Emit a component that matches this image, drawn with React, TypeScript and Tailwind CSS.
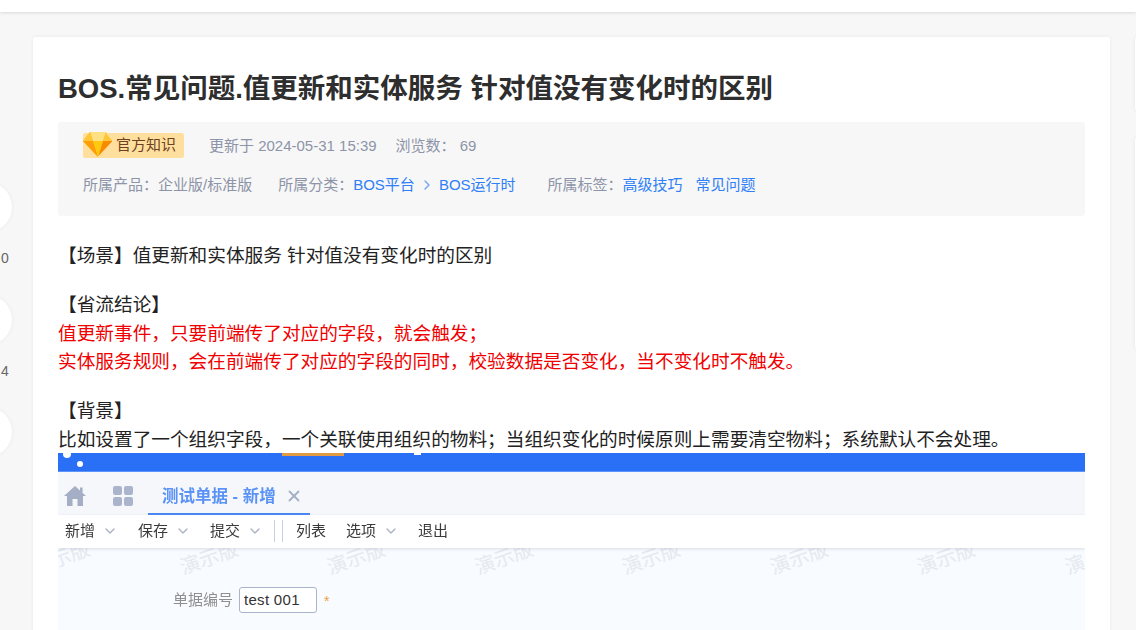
import React from 'react';
import { ChevronDown, X } from 'lucide-react';

const font = "[font-family:'Liberation_Sans','Noto_Sans_CJK_SC',sans-serif]";

const toolbarItems = [
  { label: '新增', width: 'w-[73px]' },
  { label: '保存', width: 'w-[72px]' },
  { label: '提交', width: 'w-[64px]' },
];

const watermarks = [0, 1, 2, 3, 4, 5, 6, 7];

const Diamond = () => (
  <svg width="30" height="26" viewBox="0 0 30 26" className="shrink-0">
    <polygon points="7,1 23,1 30,10 15,26 0,10" fill="#ffb400" />
    <polygon points="7,1 23,1 20,10 10,10" fill="#ffe082" />
    <polygon points="0,10 10,10 15,26" fill="#ff9d0a" />
    <polygon points="30,10 20,10 15,26" fill="#f98a00" />
    <polygon points="10,10 20,10 15,26" fill="#ffc912" />
    <polygon points="7,1 10,10 0,10" fill="#ffc63a" />
    <polygon points="23,1 20,10 30,10" fill="#ffc63a" />
    <polyline points="23,1 30,10 15,26" fill="none" stroke="#fff3d0" strokeWidth="0.8" />
  </svg>
);

const HomeIcon = () => (
  <svg width="22" height="20" viewBox="0 0 22 20" className="mt-[6px] shrink-0" fill="#a4afc6">
    <path d="M11 0 L22 10 L19 10 L19 20 L13.5 20 L13.5 13 L8.5 13 L8.5 20 L3 20 L3 10 L0 10 Z" />
    <rect x="16" y="1.5" width="2.6" height="5" />
  </svg>
);

const FakeScreenshot = () => (
  <div className="relative mt-[-2px] h-[177px] overflow-hidden bg-[#f8fbff]">
    <div className="relative h-[19px] border-b border-[#5c94fa] bg-[#2a70f6]">
      <div className="absolute left-[5px] top-[-3px] h-[8px] w-[8px] rounded-full bg-white" />
      <div className="absolute left-[19px] top-[8px] h-[6px] w-[6px] rounded-full bg-white" />
      <div className="absolute left-[224px] top-0 h-[3px] w-[62px] bg-[#e39a45]" />
      <div className="absolute left-[356px] top-[-2px] h-[4px] w-[7px] bg-white" />
    </div>
    <div className="flex h-[43px] items-center bg-[#f5f7fb] pl-[6px]">
      <HomeIcon />
      <div className="ml-[27px] mt-[6px] grid h-[20px] w-[20px] grid-cols-2 gap-[2px]">
        <span className="rounded-[2px] bg-[#aab5cd]" />
        <span className="rounded-[2px] bg-[#aab5cd]" />
        <span className="rounded-[2px] bg-[#aab5cd]" />
        <span className="rounded-[2px] bg-[#aab5cd]" />
      </div>
      <div className="ml-[15px] flex h-full w-[162px] items-center border-b-2 border-[#4a88f5] pl-[14px] pt-[8px]">
        <span className="text-[16.5px] font-bold whitespace-nowrap text-[#5a93f5] blur-[0.3px]">测试单据 - 新增</span>
        <X size={18} strokeWidth={2.4} className="ml-[9px] shrink-0 text-[#a4afc6]" />
      </div>
    </div>
    <div className="relative z-10 flex h-[33px] items-center bg-white pl-[7px] text-[15px] text-[#3a3a3a] shadow-[0_1px_3px_rgba(120,130,160,0.25)]">
      {toolbarItems.map((item) => (
        <div key={item.label} className={`flex items-center ${item.width}`}>
          <span className="blur-[0.3px]">{item.label}</span>
          <ChevronDown size={16} className="ml-[7px] text-[#a9b1c2]" />
        </div>
      ))}
      <span className="h-[22px] w-[1px] bg-[#c5cfe6]" />
      <span className="ml-[7px] h-[22px] w-[1px] bg-[#c5cfe6]" />
      <span className="ml-[13px] blur-[0.3px]">列表</span>
      <span className="ml-[20px] blur-[0.3px]">选项</span>
      <ChevronDown size={16} className="ml-[7px] text-[#a9b1c2]" />
      <span className="ml-[19px] blur-[0.3px]">退出</span>
    </div>
    <div className="pointer-events-none absolute left-[-27px] top-[90px] flex gap-[87.5px]">
      {watermarks.map((i) => (
        <span key={i} className="w-[60px] shrink-0 -rotate-[20deg] text-[20px] whitespace-nowrap text-[#e6e9ef]">
          演示版
        </span>
      ))}
    </div>
    <div className="flex items-center pl-[115px] pt-[39px]">
      <span className="w-[66px] text-[15px] text-[#8f8f8f] blur-[0.3px]">单据编号</span>
      <div className="flex h-[26px] w-[78px] items-center rounded-[3px] border border-[#a9b4cc] bg-white pl-[4px] text-[15px] tracking-[0.3px] text-[#333]">
        test 001
      </div>
      <span className="ml-[7px] pt-[4px] text-[14px] text-[#f0a040]">*</span>
    </div>
  </div>
);

export default function App() {
  return (
    <div className={`${font} h-[630px] w-[1136px] overflow-hidden bg-[#f7f7f7]`}>
      <div className="h-[12px] bg-white shadow-[0_1px_3px_rgba(0,0,0,0.12)]" />
      <div className="flex pt-[25px]">
        <aside className="flex w-[33px] shrink-0 flex-col overflow-hidden pt-[145px] text-[14px] text-[#666]">
          {['0', '4', ''].map((count, i) => (
            <div key={i} className="flex h-[112.5px] flex-col">
              <div className="ml-[-38px] h-[50px] w-[50px] shrink-0 rounded-full bg-white shadow-[0_0_4px_rgba(0,0,0,0.06)]" />
              <span className="mt-[18px] pl-[1px] leading-[16px]">{count}</span>
            </div>
          ))}
        </aside>

        <main className="h-[600px] w-[1077px] shrink-0 rounded-[3px] bg-white px-[25px] pt-[32px] shadow-[0_0_4px_rgba(0,0,0,0.06)]">
          <h1 className="text-[27.5px] leading-[40px] font-bold whitespace-nowrap text-[#2e2e2e]">
            BOS.常见问题.值更新和实体服务 针对值没有变化时的区别
          </h1>

          <div className="mt-[13px] h-[94px] rounded-[3px] bg-[#f7f7f7] pl-[25px] text-[15px] text-[#8d94a8]">
            <div className="flex h-[44px] items-center pt-[2px]">
              <div className="relative flex h-[25px] w-[101px] items-center justify-end rounded-[2px] bg-[#ffdf9e] pr-[8px] text-[#6f3f1e]">
                <span className="absolute left-0 top-[-2px]">
                  <Diamond />
                </span>
                官方知识
              </div>
              <span className="ml-[25px] pt-[2px]">更新于 2024-05-31 15:39</span>
              <span className="ml-[19px] pt-[2px]">浏览数：</span>
              <span className="ml-[4px] pt-[2px]">69</span>
            </div>
            <div className="mt-[3px] flex h-[32px] items-center">
              <span>所属产品：企业版/标准版</span>
              <span className="ml-[26px]">所属分类：</span>
              <span className="text-[#2f80f6]">BOS平台</span>
              <span className="mx-[4px] text-[#6fa5f5]">
                <ChevronDown size={16} className="-rotate-90" />
              </span>
              <span className="text-[#2f80f6]">BOS运行时</span>
              <span className="ml-[32px]">所属标签：</span>
              <span className="text-[#2f80f6]">高级技巧</span>
              <span className="ml-[13px] text-[#2f80f6]">常见问题</span>
            </div>
          </div>

          <div className="mt-[26px] text-[18.67px] leading-[28.8px] whitespace-nowrap text-[#222]">
            <p>【场景】值更新和实体服务 针对值没有变化时的区别</p>
            <p className="mt-[20px]">【省流结论】</p>
            <p className="text-[#f00000]">值更新事件，只要前端传了对应的字段，就会触发；</p>
            <p className="text-[#f00000]">实体服务规则，会在前端传了对应的字段的同时，校验数据是否变化，当不变化时不触发。</p>
            <p className="mt-[20px]">【背景】</p>
            <p>比如设置了一个组织字段，一个关联使用组织的物料；当组织变化的时候原则上需要清空物料；系统默认不会处理。</p>
          </div>

          <FakeScreenshot />
        </main>

        <aside className="ml-[25px] flex w-[200px] shrink-0 flex-col gap-[26px]">
          <div className="h-[74px] rounded-[3px] bg-white shadow-[0_0_4px_rgba(0,0,0,0.08)]" />
          <div className="h-[212px] rounded-[3px] bg-white shadow-[0_0_4px_rgba(0,0,0,0.08)]" />
        </aside>
      </div>
    </div>
  );
}
